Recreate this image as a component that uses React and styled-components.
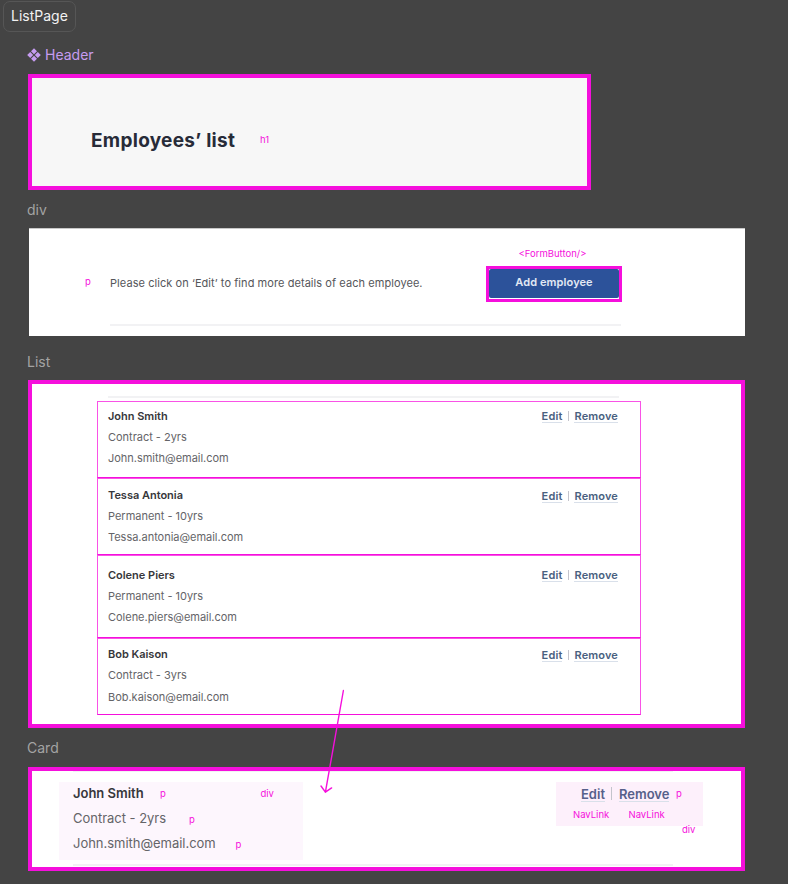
import React from 'react';
import styled, { createGlobalStyle } from 'styled-components';

const PINK = '#f50fdc';
const PINK_SOFT = '#f952e6';

const Global = createGlobalStyle`
  * { box-sizing: border-box; }
  body { margin: 0; background: #444; font-family: Inter, "Liberation Sans", sans-serif; }
  p, h1 { margin: 0; }
`;

const Canvas = styled.main`
  position: relative;
  width: 788px;
  height: 884px;
  overflow: hidden;
  background: #444;
`;

const PageBadge = styled.div`
  width: 73px;
  height: 31px;
  margin: 1px 0 0 3px;
  padding-left: 7px;
  border: 1px solid #565656;
  border-radius: 7px;
  color: #f2f2f2;
  font-size: 14px;
  line-height: 28px;
`;

const Sections = styled.div`
  display: flex;
  flex-direction: column;
  padding-left: 28px;
`;

const SectionLabel = styled.div`
  display: flex;
  align-items: center;
  gap: 4px;
  height: ${(p) => p.$height}px;
  padding-top: ${(p) => p.$top || 0}px;
  margin-left: -1px;
  color: ${(p) => (p.$component ? '#c69cf0' : '#a3a3a3')};
  font-size: 14px;
  line-height: 18px;
`;

const Frame = styled.section`
  position: relative;
  width: ${(p) => p.$width}px;
  height: ${(p) => p.$height}px;
  border: 4px solid ${PINK};
  background: ${(p) => p.$background || '#fff'};
`;

const Title = styled.h1`
  padding: 51px 0 0 59px;
  color: #272b38;
  font-size: 19px;
  font-weight: 700;
  line-height: 24px;
  letter-spacing: 0.28px;
`;

const Note = styled.span`
  position: absolute;
  left: ${(p) => p.$x}px;
  top: ${(p) => p.$y}px;
  color: ${PINK};
  font-size: 9.5px;
  line-height: 12px;
  white-space: nowrap;
`;

const Intro = styled.section`
  position: relative;
  width: 716px;
  height: 108px;
  margin-left: 1px;
  padding: 37px 123px 0 81px;
  background: #fff;
  border-top: 1px solid #c8c8c8;
`;

const IntroRow = styled.div`
  display: flex;
  align-items: center;
  justify-content: space-between;
  height: 36px;
`;

const IntroText = styled.p`
  padding-bottom: 3px;
  color: #55565a;
  font-size: 11px;
  letter-spacing: 0.065px;
`;

const ButtonOutline = styled.div`
  width: 136px;
  height: 36px;
  padding: 0 0 1px;
  border: 3px solid ${PINK};
  background: #fff;
`;

const FormButton = styled.button`
  display: block;
  width: 100%;
  height: 29px;
  padding: 0 0 2px;
  border: 0;
  border-radius: 2px;
  background: #2c529a;
  color: #e3e9f4;
  font: 600 11px/27px Inter, sans-serif;
  letter-spacing: 0.1px;
`;

const Rule = styled.div`
  width: ${(p) => p.$width}px;
  height: ${(p) => p.$height || 2}px;
  margin: ${(p) => p.$top}px 0 0 ${(p) => p.$left || 0}px;
  background: #f2f2f4;
`;

const EmployeeList = styled.div`
  display: flex;
  flex-direction: column;
  margin: 3px 0 0 65px;
  width: 544px;
`;

const EmployeeCard = styled.article`
  display: flex;
  justify-content: space-between;
  height: ${(p) => p.$height}px;
  padding: ${(p) => p.$top}px 22px 0 10px;
  border: 1px solid ${PINK_SOFT};
  border-bottom-color: ${PINK};
`;

const Details = styled.div`
  font-size: ${(p) => (p.$large ? 13 : 11)}px;
  line-height: ${(p) => (p.$large ? 24.8 : 21.2)}px;
  letter-spacing: -0.02px;
`;

const Name = styled.p`
  color: #37373b;
  font-weight: 600;
`;

const Line = styled.p`
  color: #646468;
`;

const Links = styled.div`
  display: flex;
  align-items: flex-start;
  gap: ${(p) => (p.$large ? 6.5 : 5.5)}px;
  padding-top: ${(p) => p.$top}px;
  font-size: ${(p) => (p.$large ? 13 : 11)}px;
`;

const NavLink = styled.a`
  height: ${(p) => (p.$large ? 16 : 13)}px;
  border-bottom: 1px solid #d9e0ea;
  color: ${(p) => (p.$large ? '#57608a' : '#49607f')};
  font-weight: 600;
  line-height: ${(p) => (p.$large ? 16 : 13)}px;
  letter-spacing: ${(p) => (p.$large ? 0 : 0.14)}px;
`;

const Divider = styled.span`
  width: 1px;
  height: ${(p) => (p.$large ? 13 : 10)}px;
  margin-top: 1px;
  background: #c4c4cc;
`;

const CardBody = styled.div`
  display: flex;
  align-items: flex-start;
  justify-content: space-between;
  height: 92px;
  padding: 10px 38px 0 27px;
`;

const DetailsPanel = styled.div`
  width: 244px;
  height: 78px;
  background: #fdf6fd;

  ${Details} {
    padding-left: 14px;
    margin-top: -1px;
  }
`;

const LinksPanel = styled.div`
  width: 147px;
  height: 44px;
  padding-left: 25px;
  background: #fdf0fb;
`;

const Arrow = styled.svg`
  position: absolute;
  left: 316px;
  top: 686px;
`;

const employees = [
  { name: 'John Smith', contract: 'Contract - 2yrs', email: 'John.smith@email.com', height: 77, top: 3.7, linksTop: 4.3 },
  { name: 'Tessa Antonia', contract: 'Permanent - 10yrs', email: 'Tessa.antonia@email.com', height: 77, top: 6, linksTop: 4.5 },
  { name: 'Colene Piers', contract: 'Permanent - 10yrs', email: 'Colene.piers@email.com', height: 83, top: 8.8, linksTop: 4.4 },
  { name: 'Bob Kaison', contract: 'Contract - 3yrs', email: 'Bob.kaison@email.com', height: 77, top: 5.2, linksTop: 4.4 },
];

function ComponentIcon() {
  return (
    <svg width="14" height="14" viewBox="0 0 14 14" fill="#c69cf0">
      <path d="M7 .2 10 3.2 7 6.2 4 3.2ZM7 7.8l3 3L7 13.8l-3-3ZM3.2 4l3 3-3 3-3-3ZM10.8 4l3 3-3 3-3-3Z" />
    </svg>
  );
}

function EmployeeDetails({ person, large }) {
  return (
    <Details $large={large}>
      <Name>{person.name}</Name>
      <Line>{person.contract}</Line>
      <Line>{person.email}</Line>
    </Details>
  );
}

function EmployeeLinks({ large, top }) {
  return (
    <Links $large={large} $top={top}>
      <NavLink $large={large}>Edit</NavLink>
      <Divider $large={large} />
      <NavLink $large={large}>Remove</NavLink>
    </Links>
  );
}

export default function App() {
  return (
    <>
      <Global />
      <Canvas>
        <PageBadge>ListPage</PageBadge>
        <Sections>
          <SectionLabel $component $height={42} $top={4}>
            <ComponentIcon />
            Header
          </SectionLabel>
          <Frame $width={563} $height={116} $background="#f7f7f7">
            <Title>Employees’ list</Title>
            <Note $x={228} $y={56}>h1</Note>
          </Frame>

          <SectionLabel $height={38} $top={2}>div</SectionLabel>
          <Intro>
            <Note $x={56} $y={47}>p</Note>
            <Note $x={489.5} $y={19}>&lt;FormButton/&gt;</Note>
            <IntroRow>
              <IntroText>Please click on ‘Edit’ to find more details of each employee.</IntroText>
              <ButtonOutline>
                <FormButton>Add employee</FormButton>
              </ButtonOutline>
            </IntroRow>
            <Rule $width={511} $top={22} />
          </Intro>

          <SectionLabel $height={44} $top={8}>List</SectionLabel>
          <Frame $width={717} $height={348}>
            <Rule $width={511} $top={12} $left={76} />
            <EmployeeList>
              {employees.map((person) => (
                <EmployeeCard key={person.name} $height={person.height} $top={person.top}>
                  <EmployeeDetails person={person} />
                  <EmployeeLinks top={person.linksTop} />
                </EmployeeCard>
              ))}
            </EmployeeList>
          </Frame>

          <SectionLabel $height={39} $top={1}>Card</SectionLabel>
          <Frame $width={717} $height={104}>
            <Rule $width={600} $height={1} $top={0} $left={41} />
            <CardBody>
              <DetailsPanel>
                <EmployeeDetails person={employees[0]} large />
              </DetailsPanel>
              <LinksPanel>
                <EmployeeLinks large top={4} />
              </LinksPanel>
            </CardBody>
            <Rule $width={600} $top={0} $left={41} />
            <Note $x={128} $y={17}>p</Note>
            <Note $x={228.5} $y={17}>div</Note>
            <Note $x={157} $y={42.5}>p</Note>
            <Note $x={203.5} $y={68}>p</Note>
            <Note $x={644} $y={17}>p</Note>
            <Note $x={541} $y={38}>NavLink</Note>
            <Note $x={596.5} $y={38}>NavLink</Note>
            <Note $x={650} $y={53}>div</Note>
          </Frame>
        </Sections>
        <Arrow width="32" height="112" viewBox="0 0 32 112" fill="none" stroke={PINK} strokeWidth="1.4" strokeLinecap="round" strokeLinejoin="round">
          <path d="M27.4 4.5 9.4 106.2M5 100l4.4 6.2 6.2-4.3" />
        </Arrow>
      </Canvas>
    </>
  );
}
